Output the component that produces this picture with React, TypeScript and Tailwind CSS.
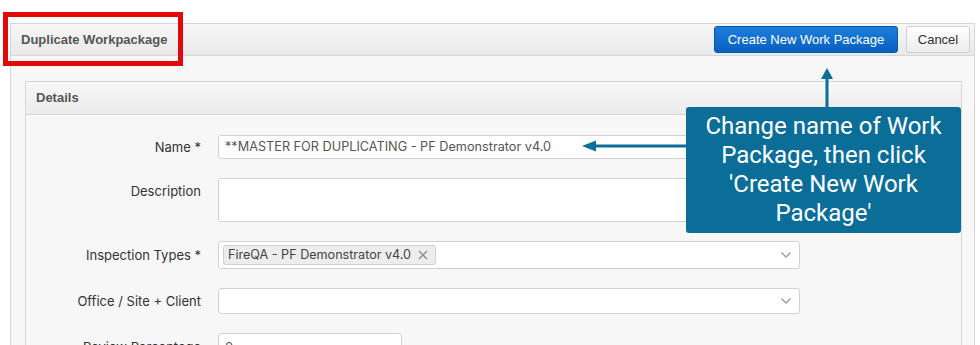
import React from "react";

const labelCls =
  "w-[175px] shrink-0 text-right text-[13px] text-[#333] font-['Inter',sans-serif] leading-none";

function Chevron() {
  return (
    <svg width="12" height="8" viewBox="0 0 12 8" className="shrink-0">
      <path d="M1.5 1.5 L6 6 L10.5 1.5" fill="none" stroke="#9a9a9a" strokeWidth="1.3" />
    </svg>
  );
}

export default function App() {
  return (
    <div className="relative w-[980px] h-[345px] overflow-hidden bg-white pt-[23px] pl-[10px] pr-[5px] font-['Liberation_Sans',Arial,sans-serif]">
      {/* outer panel */}
      <div className="border border-[#d6d6d6] bg-[#f7f7f7] h-[400px]">
        <div className="h-[32px] flex items-center justify-between pl-[10px] pr-[4px] border-b border-[#d6d6d6] bg-gradient-to-b from-[#f7f7f7] to-[#e9e9e9]">
          <span className="text-[13px] font-bold text-[#555]">Duplicate Workpackage</span>
          <div className="flex items-center gap-[8px]">
            <button className="h-[27px] w-[184px] rounded-[3px] border border-[#0a58ad] bg-gradient-to-b from-[#1c7fdc] to-[#0a5fc0] text-white text-[13px] font-['Liberation_Sans',Arial,sans-serif]">
              Create New Work Package
            </button>
            <button className="h-[27px] w-[64px] rounded-[3px] border border-[#cfcfcf] bg-gradient-to-b from-white to-[#ececec] text-[#333] text-[13px] font-['Liberation_Sans',Arial,sans-serif]">
              Cancel
            </button>
          </div>
        </div>

        <div className="pt-[25px] pl-[14px] pr-[12px]">
          <div className="border border-[#d6d6d6] bg-[#f7f7f7]">
            <div className="h-[33px] flex items-center pl-[10px] border-b border-[#d6d6d6] bg-gradient-to-b from-[#f7f7f7] to-[#ebebeb]">
              <span className="text-[13px] font-bold text-[#555]">Details</span>
            </div>

            <div className="pt-[20px] flex flex-col gap-[19px]">
              {/* Name */}
              <div className="flex items-center gap-[17px]">
                <div className={labelCls}>Name *</div>
                <div className="h-[24px] w-[582px] rounded-[3px] border border-[#d2d2d2] bg-white flex items-center pl-[6px] text-[12.7px] text-[#555] font-['Inter',sans-serif]">
                  **MASTER FOR DUPLICATING - PF Demonstrator v4.0
                </div>
              </div>

              {/* Description */}
              <div className="flex items-start gap-[17px]">
                <div className={labelCls + " pt-[7px]"}>Description</div>
                <div className="h-[44px] w-[582px] rounded-[3px] border border-[#d2d2d2] bg-white" />
              </div>

              {/* Inspection Types */}
              <div className="flex items-center gap-[17px]">
                <div className={labelCls}>Inspection Types *</div>
                <div className="h-[28px] w-[582px] rounded-[3px] border border-[#d2d2d2] bg-white flex items-center justify-between pl-[4px] pr-[7px]">
                  <div className="h-[20px] w-[213px] rounded-[3px] border border-[#cfcfcf] bg-[#ededed] flex items-center pl-[4px] gap-[7px] text-[12.6px] text-[#444] font-['Inter',sans-serif]">
                    <span>FireQA - PF Demonstrator v4.0</span>
                    <svg width="10" height="10" viewBox="0 0 10 10" className="shrink-0">
                      <path d="M1 1 L9 9 M9 1 L1 9" stroke="#8a8a8a" strokeWidth="1.4" />
                    </svg>
                  </div>
                  <Chevron />
                </div>
              </div>

              {/* Office */}
              <div className="flex items-center gap-[17px]">
                <div className={labelCls}>Office / Site + Client</div>
                <div className="h-[26px] w-[582px] rounded-[3px] border border-[#d2d2d2] bg-white flex items-center justify-end pr-[7px]">
                  <Chevron />
                </div>
              </div>

              {/* Review */}
              <div className="flex items-start gap-[17px]">
                <div className={labelCls + " pt-[8px]"}>Review Percentage</div>
                <div className="h-[26px] w-[184px] rounded-[3px] border border-[#d2d2d2] bg-white pl-[6px] pt-[4px] text-[13px] text-[#555] font-['Inter',sans-serif]">
                  0
                </div>
              </div>
            </div>
          </div>
        </div>
      </div>

      {/* red highlight annotation */}
      <div className="absolute left-[3px] top-[12px] w-[180px] h-[54px] border-[5px] border-[#e10a0a]" />

      {/* callout */}
      <div className="absolute left-[686px] top-[107px] w-[275px] h-[126px] rounded-[3px] bg-[#0a6e99] flex items-center justify-center text-center text-white text-[24px] leading-[29px] font-['Roboto',sans-serif]">
        <div>
          Change name of Work
          <br />
          Package, then click
          <br />
          'Create New Work
          <br />
          Package'
        </div>
      </div>

      {/* arrows */}
      <svg className="absolute left-[815px] top-[66px]" width="24" height="42" viewBox="0 0 24 42">
        <path d="M12 10 L12 42" stroke="#0a6e99" strokeWidth="3" />
        <path d="M12 2 L18 13 L6 13 Z" fill="#0a6e99" />
      </svg>
      <svg className="absolute left-[580px] top-[138px]" width="108" height="16" viewBox="0 0 108 16">
        <path d="M12 8 L108 8" stroke="#0a6e99" strokeWidth="3" />
        <path d="M2 8 L16 2.5 L16 13.5 Z" fill="#0a6e99" />
      </svg>
    </div>
  );
}
